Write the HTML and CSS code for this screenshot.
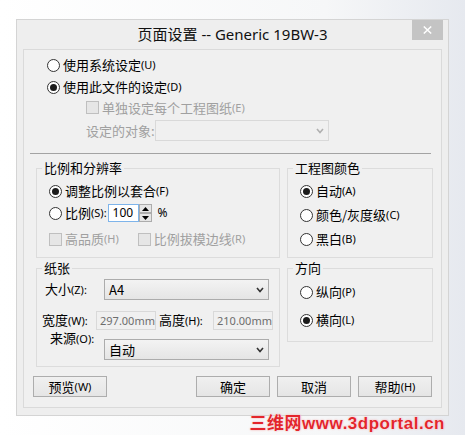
FILE: index.html
```html
<!DOCTYPE html>
<html lang="zh-CN">
<head>
<meta charset="utf-8">
<title>页面设置</title>
<link rel="stylesheet" href="styles.css">
</head>
<body>
<div class="page">
  <div class="window">
    <div class="titlebar">
      <span class="title">页面设置 -- Generic 19BW-3</span>
      <span class="close"><svg width="9" height="8" viewBox="0 0 9 8"><path d="M0.8 0.5 L8.2 7.5 M8.2 0.5 L0.8 7.5" stroke="#fff" stroke-width="1.5" fill="none"/></svg></span>
    </div>
    <div class="panel">
      <div class="source">
        <div class="row r22"><span class="radio"></span>使用系统设定<span class="k">(U)</span></div>
        <div class="row r22"><span class="radio on"></span>使用此文件的设定<span class="k">(D)</span></div>
        <div class="row sub dis r19"><span class="check"></span>单独设定每个工程图纸<span class="k">(E)</span></div>
        <div class="row sub dis target">设定的对象:<span class="combo disabled"><span></span><svg class="chev" width="8" height="6" viewBox="0 0 8 6"><path d="M1 1 L4 4.5 L7 1" stroke="#b0b0b0" stroke-width="1.6" fill="none"/></svg></span></div>
      </div>
      <div class="sep"></div>
      <div class="groups">
        <fieldset class="g-scale">
          <legend>比例和分辨率</legend>
          <div class="gbody">
            <div class="row r22"><span class="radio on"></span>调整比例以套合<span class="k">(F)</span></div>
            <div class="row r22"><span class="radio"></span>比例<span class="k">(S):</span>
              <span class="spin">
                <span class="spin-input">100</span>
                <span class="spin-btns">
                  <span class="spin-btn"><svg width="7" height="4" viewBox="0 0 7 4"><path d="M0 4 L3.5 0 L7 4 Z" fill="#000"/></svg></span>
                  <span class="spin-btn"><svg width="7" height="4" viewBox="0 0 7 4"><path d="M0 0 L3.5 4 L7 0 Z" fill="#000"/></svg></span>
                </span>
              </span>
              <span class="pct">%</span>
            </div>
            <div class="row r20 dis checks"><span class="check"></span>高品质<span class="k">(H)</span><span class="check check2"></span>比例拔模边线<span class="k">(R)</span></div>
          </div>
        </fieldset>
        <fieldset class="g-color">
          <legend>工程图颜色</legend>
          <div class="gbody">
            <div class="row"><span class="radio on"></span>自动<span class="k">(A)</span></div>
            <div class="row"><span class="radio"></span>颜色/灰度级<span class="k">(C)</span></div>
            <div class="row"><span class="radio"></span>黑白<span class="k">(B)</span></div>
          </div>
        </fieldset>
        <fieldset class="g-paper">
          <legend>纸张</legend>
          <div class="p-row p-size"><span class="p-label">大小<span class="k">(Z):</span></span><span class="combo"><span>A4</span><svg class="chev" width="8" height="6" viewBox="0 0 8 6"><path d="M1 1 L4 4.5 L7 1" stroke="#333" stroke-width="1.6" fill="none"/></svg></span></div>
          <div class="p-row p-dim"><span class="p-label">宽度<span class="k">(W):</span></span><span class="field">297.00mm</span><span class="p-label2">高度<span class="k">(H):</span></span><span class="field">210.00mm</span></div>
          <div class="p-row p-src"><span class="p-label">来源<span class="k">(O):</span></span><span class="combo"><span>自动</span><svg class="chev" width="8" height="6" viewBox="0 0 8 6"><path d="M1 1 L4 4.5 L7 1" stroke="#333" stroke-width="1.6" fill="none"/></svg></span></div>
        </fieldset>
        <fieldset class="g-orient">
          <legend>方向</legend>
          <div class="gbody">
            <div class="row"><span class="radio"></span>纵向<span class="k">(P)</span></div>
            <div class="row"><span class="radio on"></span>横向<span class="k">(L)</span></div>
          </div>
        </fieldset>
      </div>
      <div class="buttons">
        <span class="btn btn-preview">预览<span class="k">(W)</span></span>
        <span class="btn">确定</span>
        <span class="btn">取消</span>
        <span class="btn">帮助<span class="k">(H)</span></span>
      </div>
    </div>
  </div>
  <div class="watermark">三维网www.3dportal.cn</div>
</div>
</body>
</html>
```
FILE: styles.css
```css
* { box-sizing: border-box; }
html, body { margin: 0; }
body {
  width: 465px;
  height: 435px;
  overflow: hidden;
  background: linear-gradient(to right, #ffffff 0%, #f6f7f8 70%, #e6e9ef 100%);
  font-family: "Noto Sans CJK SC", "Noto Sans", sans-serif;
  font-size: 13px;
  color: #000;
}
.page { padding: 19px 0 0 16px; }
.window {
  width: 433px;
  height: 397px;
  border: 1px solid #d4d4d4;
  background: #eeeeee;
}
.titlebar {
  position: relative;
  height: 29px;
  line-height: 29px;
  text-align: center;
  font-family: "Noto Sans", "Noto Sans CJK SC", sans-serif;
  font-size: 15px;
  color: #111;
}
.close {
  position: absolute;
  top: 0;
  right: 5px;
  width: 31px;
  height: 20px;
  background: #c4c4c4;
  display: flex;
  align-items: center;
  justify-content: center;
}
.panel {
  margin: 0 6px;
  height: 359px;
  border: 1px solid #dadada;
  background: #f0f0f0;
}
.k { font-family: "Noto Sans", sans-serif; font-size: 11px; }
.row { display: flex; align-items: center; white-space: nowrap; line-height: 18px; }
.r22 { height: 22px; }
.r20 { height: 20px; }
.r19 { height: 19px; }
.radio {
  flex: none;
  width: 13px;
  height: 13px;
  border: 1px solid #333;
  border-radius: 50%;
  background: #fff;
  margin-right: 3px;
  display: flex;
  align-items: center;
  justify-content: center;
}
.radio.on::after {
  content: "";
  width: 7px;
  height: 7px;
  border-radius: 50%;
  background: #1b1b1b;
}
.check {
  flex: none;
  width: 13px;
  height: 13px;
  border: 1px solid #bfbfbf;
  background: #e6e6e6;
  margin-right: 3px;
}
.dis { color: #a0a0a0; }
.source { padding: 4px 0 0 23px; }
.sub { padding-left: 39px; }
.target { margin-top: 3px; height: 21px; }
.combo {
  display: flex;
  align-items: center;
  justify-content: space-between;
  height: 21px;
  border: 1px solid #acacac;
  background: linear-gradient(#f3f3f3, #e5e5e5);
  padding: 0 4px;
  line-height: 18px;
}
.combo.disabled {
  width: 174px;
  border-color: #d9d9d9;
  background: #f0f0f0;
}
.chev { flex: none; }
.sep {
  margin: 12px 0 0 6px;
  width: 401px;
  height: 1px;
  background: #a3a3a3;
}
.groups {
  display: grid;
  grid-template-columns: 244px 146px;
  column-gap: 7px;
  row-gap: 1px;
  margin: 5px 0 0 12px;
}
fieldset {
  margin: 0;
  padding: 0;
  min-width: 0;
  border: 1px solid #dcdcdc;
}
legend {
  margin-left: 5px;
  padding: 0 2px;
  height: 18px;
  line-height: 18px;
}
.gbody { padding-left: 12px; }
.g-scale .gbody { padding-top: 3px; padding-bottom: 8px; }
.checks { margin-top: 5px; }
.check2 { margin-left: 19px; }
.spin { display: flex; height: 18px; margin-left: 1px; }
.spin-input {
  width: 31px;
  height: 18px;
  border: 1px solid #7eb4ea;
  background: #fff;
  font-family: "Noto Sans", sans-serif;
  font-size: 12px;
  line-height: 16px;
  padding-left: 4px;
}
.spin-btns { display: flex; flex-direction: column; width: 13px; }
.spin-btn {
  height: 9px;
  border: 1px solid #acacac;
  background: #e5e5e5;
  display: flex;
  align-items: center;
  justify-content: center;
}
.pct { margin-left: 6px; font-family: "Noto Sans", sans-serif; font-size: 12px; }
.g-color .gbody { padding-top: 2px; padding-bottom: 6px; }
.g-color .row { height: 24px; }
.g-paper { padding: 2px 0 6px 0; }
.p-row { display: flex; align-items: center; white-space: nowrap; line-height: 18px; }
.p-label { flex: none; width: 67px; padding-left: 8px; }
.p-size { height: 21px; }
.p-size .combo, .p-src .combo { width: 165px; }
.p-dim { margin-top: 11px; height: 19px; }
.p-dim .p-label { width: 59px; padding-left: 5px; }
.p-label2 { flex: none; width: 57px; padding-left: 3px; }
.field {
  flex: none;
  width: 60px;
  height: 19px;
  border: 1px solid #d9d9d9;
  background: #f0f0f0;
  color: #6d6d6d;
  font-family: "Noto Sans", sans-serif;
  font-size: 11px;
  line-height: 17px;
  padding-left: 3px;
}
.p-src { align-items: flex-start; }
.p-src .p-label { padding-left: 13px; line-height: 16px; }
.p-src .combo { margin-top: 9px; }
.g-orient { align-self: start; }
.g-orient .gbody { padding-top: 4px; padding-bottom: 10px; }
.g-orient .row { height: 22px; }
.g-orient .row + .row { margin-top: 6px; }
.buttons { display: flex; gap: 7px; margin: 9px 9px 0 9px; }
.btn {
  width: 74px;
  height: 21px;
  border: 1px solid #adadad;
  background: linear-gradient(#f0f0f0, #e5e5e5);
  display: flex;
  align-items: center;
  justify-content: center;
  line-height: 18px;
}
.btn-preview { margin-right: auto; }
.watermark {
  text-align: right;
  padding-right: 20px;
  margin-top: -1px;
  font-family: "Liberation Sans", "Noto Sans CJK SC", sans-serif;
  font-weight: bold;
  font-size: 17px;
  line-height: 18px;
  letter-spacing: 0.5px;
  color: #e3262c;
  text-shadow: 0 0 1px #fff, 0 0 1px #fff, 0 0 2px #f08a8a;
}
```
